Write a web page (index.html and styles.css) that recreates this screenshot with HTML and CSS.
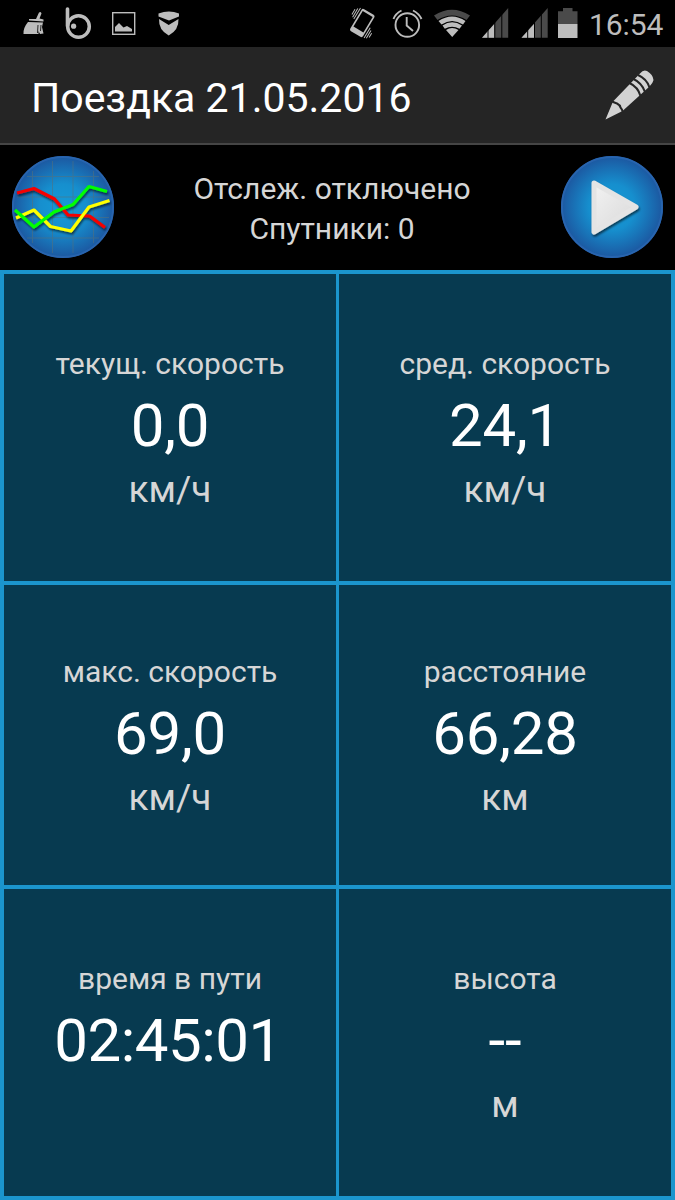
FILE: index.html
```html
<!DOCTYPE html>
<html lang="ru">
<head>
<meta charset="utf-8">
<title>Поездка</title>
<link rel="stylesheet" href="styles.css">
</head>
<body>
<div class="statusbar">
  <svg class="status-icons" width="585" height="47" viewBox="0 0 585 47" fill="#bdbdbd">
    <!-- broom -->
    <path d="M36 19L39 12.500Q41 11 41.500 13.500L39.500 18.500L43.500 19.500V21.500L29 20.500V19Z"/>
    <path d="M28 22L43 22.500L42 27L43.500 33.500L40 34L38.500 31V34H23.500Q23 28 28 22Z"/>
    <path d="M38 25L37.500 33M41 25L40.500 31" stroke="#000" stroke-width=".8"/>
    <!-- b -->
    <path d="M67.500 9V26" fill="none" stroke="#bdbdbd" stroke-width="3.600" stroke-linecap="round"/>
    <circle cx="78.500" cy="26.500" r="10.800" fill="none" stroke="#bdbdbd" stroke-width="3.500"/>
    <circle cx="73.600" cy="26.200" r="2.600"/>
    <!-- picture -->
    <rect x="112.700" y="12.700" width="22" height="21.600" fill="none" stroke="#bdbdbd" stroke-width="1.400"/>
    <path d="M115 31.500V27L119 23L123.500 27.500L127 26L132 29V31.500Z"/>
    <!-- shield -->
    <path d="M158.500 13.500Q169 9.500 179 13.500V16.500L169 20.500L158.500 16.500Z"/>
    <path d="M159 19L168.700 25L178.500 19Q179 30 168.700 35.500Q158.500 30 159 19Z"/>
    <!-- vibrating phone -->
    <g transform="translate(362.300 23) rotate(31)">
      <rect x="-7.500" y="-12.800" width="15" height="25.600" rx="2"/>
      <rect x="-5.800" y="-10.500" width="11.600" height="18" fill="#000"/>
      <path d="M-9.300 -12V1M-11.300 -10V0M-13.300 -8V-2M9.300 0V12M11.300 2V11M13.300 4V9" stroke="#bdbdbd" stroke-width="1"/>
    </g>
    <!-- alarm -->
    <g fill="none" stroke="#bdbdbd" stroke-width="1.900">
      <circle cx="407.300" cy="25" r="11.800"/>
      <path d="M406.700 17V25.500L413 31"/>
      <path d="M393.500 19Q395.500 13.500 401.500 10.500M413 10.500Q419 13.500 421.500 19"/>
    </g>
    <!-- wifi -->
    <path d="M434 15.500Q452 4 470 15.500L466.500 20Q452 11 437.500 20Z" fill="#4a4a4a"/>
    <path d="M438.500 21Q452 12 465.500 21L463 24.500Q452 17.500 441.500 24.500ZM442.500 25.500Q452 19 462 25.500L459.500 28.800Q452 24.500 444.800 28.800ZM446 30Q452 26 458.500 30L452.200 37Z"/>
    <!-- signal -->
    <path d="M482 37.800L508.200 8V37.800Z" fill="#4a4a4a"/><path d="M482 37.800L494.300 24V37.800Z"/>
    <path d="M488 20V38M494.800 15V38M501.800 8V38" stroke="#000" stroke-width="1"/>
    <path d="M521.500 37.800L547.700 8V37.800Z" fill="#4a4a4a"/><path d="M521.500 37.800L534 24V37.800Z"/>
    <path d="M527.700 20V38M534.500 15V38M541.300 8V38" stroke="#000" stroke-width="1"/>
    <!-- battery -->
    <path d="M563 8H572.500V11.300H577.500V24H558V11.300H563Z" fill="#4a4a4a"/><path d="M558 24H577.500V38H558Z"/>
  </svg>
  <span class="clock">16:54</span>
</div>
<header class="titlebar">
  <h1 class="title">Поездка 21.05.2016</h1>
  <svg class="pencil" width="50" height="50" viewBox="0 0 50 50">
    <path d="M.5 49.500L8 31.500L35 3.500Q38.500 -1 42 1Q48 4.500 48.500 10Q48 12.500 44.500 16.500L17.500 41Z" fill="#d2d2d2"/>
    <path d="M7 31.500Q10.500 33 12 33.500Q15 35 15.500 37.500Q17 39 18 42.500M24.500 13Q33 17 35.500 26M28.500 9Q37 13 40 22M33 5Q42 9 44.500 17.500" fill="none" stroke="#252525" stroke-width="2"/>
  </svg>
</header>
<section class="tracking">
  <svg class="round" width="104" height="104" viewBox="0 0 104 104">
    <defs>
      <radialGradient id="disc"><stop offset="0" stop-color="#169ad6"/><stop offset=".45" stop-color="#168fce"/><stop offset="1" stop-color="#1c57a0"/></radialGradient>
      <filter id="shade" x="-20%" y="-20%" width="140%" height="140%"><feDropShadow dx="1" dy="2" stdDeviation="1" flood-opacity=".6"/></filter>
    </defs>
    <circle cx="52" cy="52" r="51" fill="url(#disc)"/>
    <circle cx="52" cy="52" r="50" fill="none" stroke="#2864ae" stroke-width="2"/>
    <path d="M21.500 16V88M41.500 6V98M62 6V98M82.500 16V88M16 21.500H88M6 42H98M6 62.500H98M16 83H88" stroke="#55717b" stroke-width="1" opacity=".55"/>
    <g fill="none" stroke-width="3.200" stroke-linejoin="round" filter="url(#shade)">
      <path d="M6 38L23 33.500L43.500 44L57 60L78.500 61L94 72.500" stroke="#f50000"/>
      <path d="M5 63L23 55L39.500 71.500L60 76L78 52L98.500 45.500" stroke="#ff0"/>
      <path d="M4 55L23 72L43 57L62 49.500L78 31.500L96 36.500" stroke="#0f0"/>
    </g>
  </svg>
  <div class="tracking-text">
    <div class="track-state">Отслеж. отключено</div>
    <div class="track-sats">Спутники: 0</div>
  </div>
  <svg class="round" width="104" height="104" viewBox="0 0 104 104">
    <defs><linearGradient id="arrow" x2="1" y2="1"><stop stop-color="#f2f2f2"/><stop offset="1" stop-color="#d8d8d8"/></linearGradient></defs>
    <circle cx="52" cy="52" r="51" fill="url(#disc)"/>
    <circle cx="52" cy="52" r="50" fill="none" stroke="#2864ae" stroke-width="2"/>
    <path d="M34 28L76 52L34 77Z" fill="url(#arrow)" stroke="#e4e4e4" stroke-width="5" stroke-linejoin="round" filter="url(#shade)"/>
  </svg>
</section>
<main class="grid">
  <div class="cell"><div class="label">текущ. скорость</div><div class="value">0,0</div><div class="unit">км/ч</div></div>
  <div class="cell"><div class="label">сред. скорость</div><div class="value">24,1</div><div class="unit">км/ч</div></div>
  <div class="cell"><div class="label">макс. скорость</div><div class="value">69,0</div><div class="unit">км/ч</div></div>
  <div class="cell"><div class="label">расстояние</div><div class="value">66,28</div><div class="unit">км</div></div>
  <div class="cell"><div class="label">время в пути</div><div class="value duration">02:45:01</div><div class="unit"></div></div>
  <div class="cell"><div class="label">высота</div><div class="value">--</div><div class="unit">м</div></div>
</main>
</body>
</html>
```
FILE: styles.css
```css
* { box-sizing: border-box; }
body {
  margin: 0;
  width: 675px;
  height: 1200px;
  overflow: hidden;
  display: flex;
  flex-direction: column;
  background: #000;
  font-family: Roboto, sans-serif;
  white-space: nowrap;
}
.statusbar { height: 47px; display: flex; flex: none; }
.status-icons { flex: none; }
.clock { padding-left: 4px; font-size: 30px; line-height: 49px; letter-spacing: -0.1px; color: #bdbdbd; }
.titlebar {
  height: 98px;
  flex: none;
  display: flex;
  justify-content: space-between;
  align-items: flex-start;
  padding: 23px 20px 0 31px;
  background: #252525;
  border-bottom: 2px solid #454545;
}
.title { margin: 0; font-size: 41px; line-height: 56px; font-weight: 400; color: #fff; }
.pencil { flex: none; }
.tracking {
  height: 125px;
  flex: none;
  display: flex;
  justify-content: space-between;
  padding: 10px 11px 0;
}
.round { flex: none; }
.tracking-text {
  padding: 14px 11px 0 0;
  text-align: center;
  font-size: 30px;
  line-height: 40px;
  color: #d6d6d6;
}
.grid {
  height: 930px;
  flex: none;
  display: grid;
  grid-template-columns: 332px 332px;
  grid-template-rows: 307px 300px 307px;
  gap: 4px 3px;
  padding: 4px;
  background: #1b95cd;
}
.cell {
  display: flex;
  flex-direction: column;
  align-items: center;
  justify-content: center;
  padding-top: 1px;
  background: #073a50;
  color: #d6d6d6;
}
.label { font-size: 30px; line-height: 40px; }
.value { font-size: 60px; line-height: 83px; letter-spacing: -0.2px; color: #fff; }
.duration { padding-right: 4px; letter-spacing: -0.5px; }
.unit { height: 45px; font-size: 37px; line-height: 45px; }
```
